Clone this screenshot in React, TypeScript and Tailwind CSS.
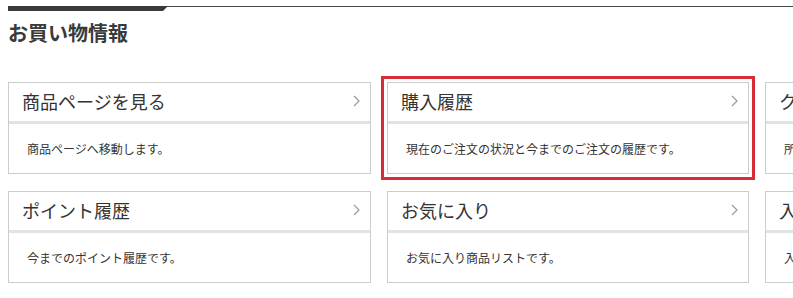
const cards = [
	{ title: '商品ページを見る', desc: '商品ページへ移動します。' },
	{ title: '購入履歴', desc: '現在のご注文の状況と今までのご注文の履歴です。', active: true },
	{ title: 'クーポン', desc: '所有しているクーポンの一覧です。' },
	{ title: 'ポイント履歴', desc: '今までのポイント履歴です。' },
	{ title: 'お気に入り', desc: 'お気に入り商品リストです。' },
	{ title: '入荷お知らせ', desc: '入荷お知らせ登録商品の一覧です。' },
]

function Chevron() {
	return (
		<svg width="7" height="12" viewBox="0 0 7 12" fill="none" className="shrink-0">
			<path d="M1 1l5 5-5 5" stroke="#9a9a9a" strokeWidth="1.2" />
		</svg>
	)
}

function MenuCard({ title, desc, active }: { title: string; desc: string; active?: boolean }) {
	return (
		<a
			href="#"
			className={
				'flex flex-col h-[92px] border border-[#cccccc] bg-white ' +
				(active ? 'outline-3 outline-offset-3 outline-[#d42d36]' : '')
			}
		>
			<div className="flex items-center justify-between h-[38px] pb-[2px] pl-[13px] pr-[10px]">
				<span className="text-[18px] leading-[26px] text-[#333] whitespace-nowrap">{title}</span>
				<Chevron />
			</div>
			<div className="h-[3px] bg-[#e3e3e3]" />
			<div className="flex flex-1 items-center pl-[18px]">
				<p className="text-[12px] text-[#333] whitespace-nowrap">{desc}</p>
			</div>
		</a>
	)
}

export default function App() {
	return (
		<div className="w-[793px] h-[298px] overflow-hidden bg-white font-['Noto_Sans_CJK_JP',sans-serif]">
			<div className="pt-[6px] pl-2">
				{/* heading rule */}
				<div className="flex items-start">
					<div className="w-[160px] h-[5px] bg-[#3a3a3a] [clip-path:polygon(0_0,100%_0,calc(100%-5px)_100%,0_100%)]" />
					<div className="flex-1 h-px bg-[#4a4a4a] -ml-[4px]" />
				</div>
				<h2 className="mt-[8px] text-[20px] leading-[28px] font-bold text-[#3a3a3a]">お買い物情報</h2>

				<div className="mt-[35px] grid grid-cols-[363px_362px_362px] gap-x-4 gap-y-[17px]">
					{cards.map((c) => (
						<MenuCard key={c.title} {...c} />
					))}
				</div>
			</div>
		</div>
	)
}
